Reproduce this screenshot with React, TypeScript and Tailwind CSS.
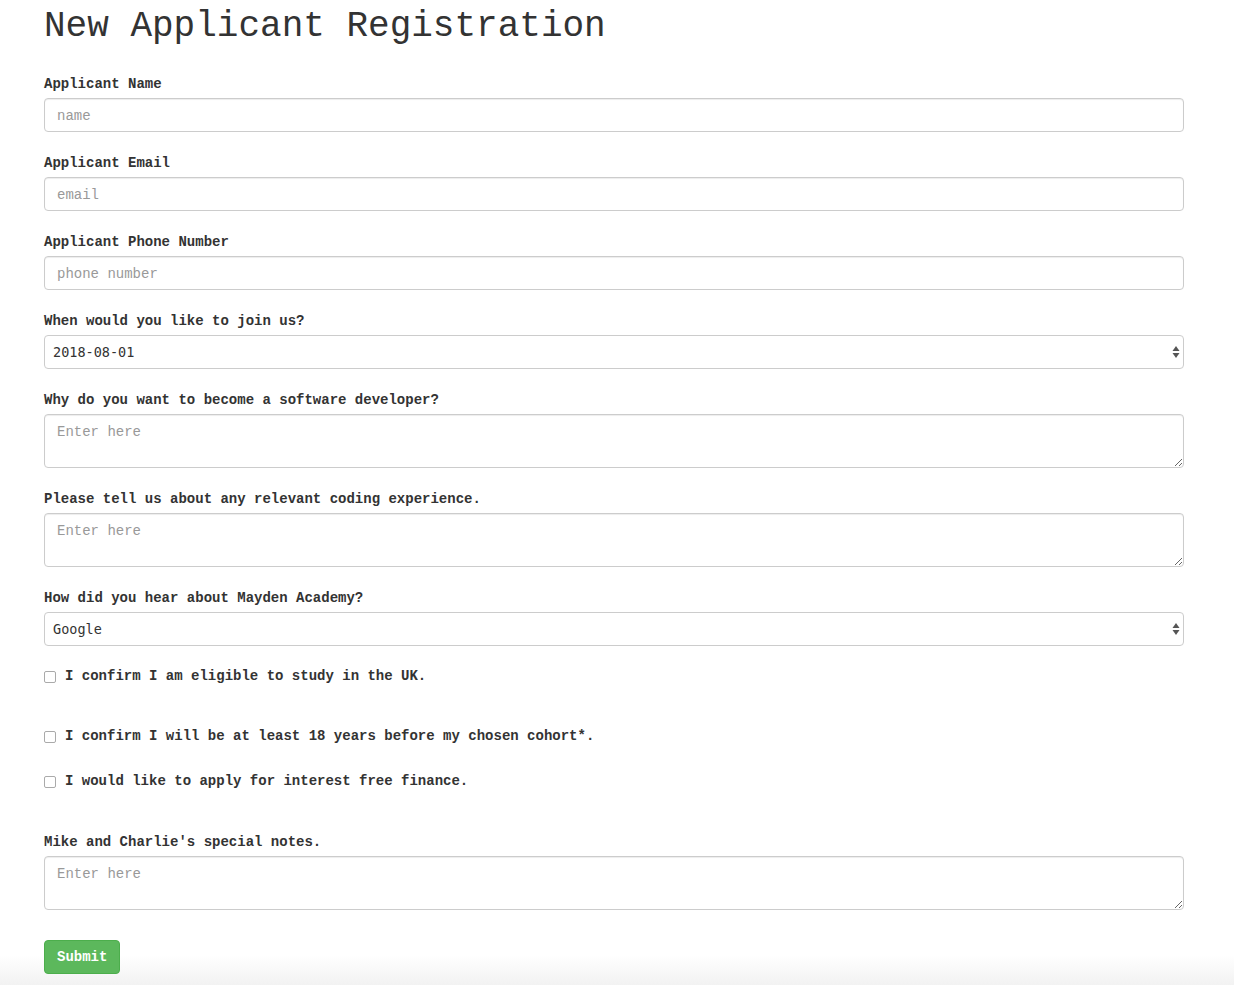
import { useState } from "react";

const mono = "font-['Liberation_Mono','Courier_New',monospace]";
const inputCls =
  "block w-full h-[34px] px-3 pt-[7px] pb-[5px] text-[14px] text-[#555] bg-white border border-[#ccc] rounded-[4px] shadow-[inset_0_1px_1px_rgba(0,0,0,0.075)] placeholder:text-[#999] outline-none";
const areaCls =
  "block w-full h-[54px] px-3 pt-[7px] pb-[5px] text-[14px] leading-[20px] text-[#555] bg-white border border-[#ccc] rounded-[4px] shadow-[inset_0_1px_1px_rgba(0,0,0,0.075)] placeholder:text-[#999] outline-none";
const labelCls = "block text-[14px] leading-[20px] font-bold text-[#333] pt-[1px] mb-[4px]";

function Field({ label, children }: { label: string; children: React.ReactNode }) {
  return (
    <div className="mb-[20px]">
      <label className={labelCls}>{label}</label>
      {children}
    </div>
  );
}

function Select({ value, options }: { value: string; options: string[] }) {
  const [v, setV] = useState(value);
  return (
    <div className="relative">
      <select
        value={v}
        onChange={(e) => setV(e.target.value)}
        className="block w-full h-[34px] pl-2 pr-6 appearance-none text-[13.5px] text-[#333] bg-white border border-[#ccc] rounded-[4px] outline-none font-['DejaVu_Sans_Mono',monospace]"
      >
        {options.map((o) => (
          <option key={o}>{o}</option>
        ))}
      </select>
      <svg className="absolute right-[4px] top-[10px] pointer-events-none" width="8" height="14" viewBox="0 0 8 14">
        <path d="M4 1 L7.5 6 H0.5 Z" fill="#555" />
        <path d="M4 13 L7.5 8 H0.5 Z" fill="#555" />
      </svg>
    </div>
  );
}

function Check({ label, className }: { label: string; className?: string }) {
  return (
    <label className={`flex items-center h-[20px] pt-[1px] text-[14px] font-bold text-[#333] ${className ?? ""}`}>
      <input type="checkbox" className="w-[12px] h-[12px] ml-0 mr-[9px] appearance-none border border-[#aaa] rounded-[2px] bg-white" />
      I {label}
    </label>
  );
}

export default function App() {
  return (
    <div className={`min-h-screen bg-[linear-gradient(to_bottom,#fff_955px,#f2f2f2_985px)] ${mono}`}>
      <div className="w-[1140px] ml-[44px]">
        <h1 className="text-[36px] leading-[40px] text-[#333] font-normal pt-[7px] mb-[26px]">
          New Applicant Registration
        </h1>
        <form>
          <Field label="Applicant Name">
            <input className={inputCls} placeholder="name" />
          </Field>
          <Field label="Applicant Email">
            <input className={inputCls} placeholder="email" />
          </Field>
          <Field label="Applicant Phone Number">
            <input className={inputCls} placeholder="phone number" />
          </Field>
          <Field label="When would you like to join us?">
            <Select value="2018-08-01" options={["2018-08-01", "2018-11-01", "2019-02-01"]} />
          </Field>
          <Field label="Why do you want to become a software developer?">
            <textarea className={areaCls} placeholder="Enter here" rows={2} />
          </Field>
          <Field label="Please tell us about any relevant coding experience.">
            <textarea className={areaCls} placeholder="Enter here" rows={2} />
          </Field>
          <Field label="How did you hear about Mayden Academy?">
            <Select value="Google" options={["Google", "Facebook", "Friend", "Other"]} />
          </Field>
          <Check label="confirm I am eligible to study in the UK." />
          <Check label="confirm I will be at least 18 years before my chosen cohort*." className="mt-[40px]" />
          <Check label="would like to apply for interest free finance." className="mt-[25px]" />
          <div className="mt-[40px]">
            <Field label="Mike and Charlie's special notes.">
              <textarea className={areaCls} placeholder="Enter here" rows={2} />
            </Field>
          </div>
          <button
            type="button"
            className="mt-[10px] h-[34px] px-3 pt-[1px] text-[14px] font-bold text-white bg-[#5cb85c] border border-[#4cae4c] rounded-[4px]"
          >
            Submit
          </button>
        </form>
      </div>
    </div>
  );
}
